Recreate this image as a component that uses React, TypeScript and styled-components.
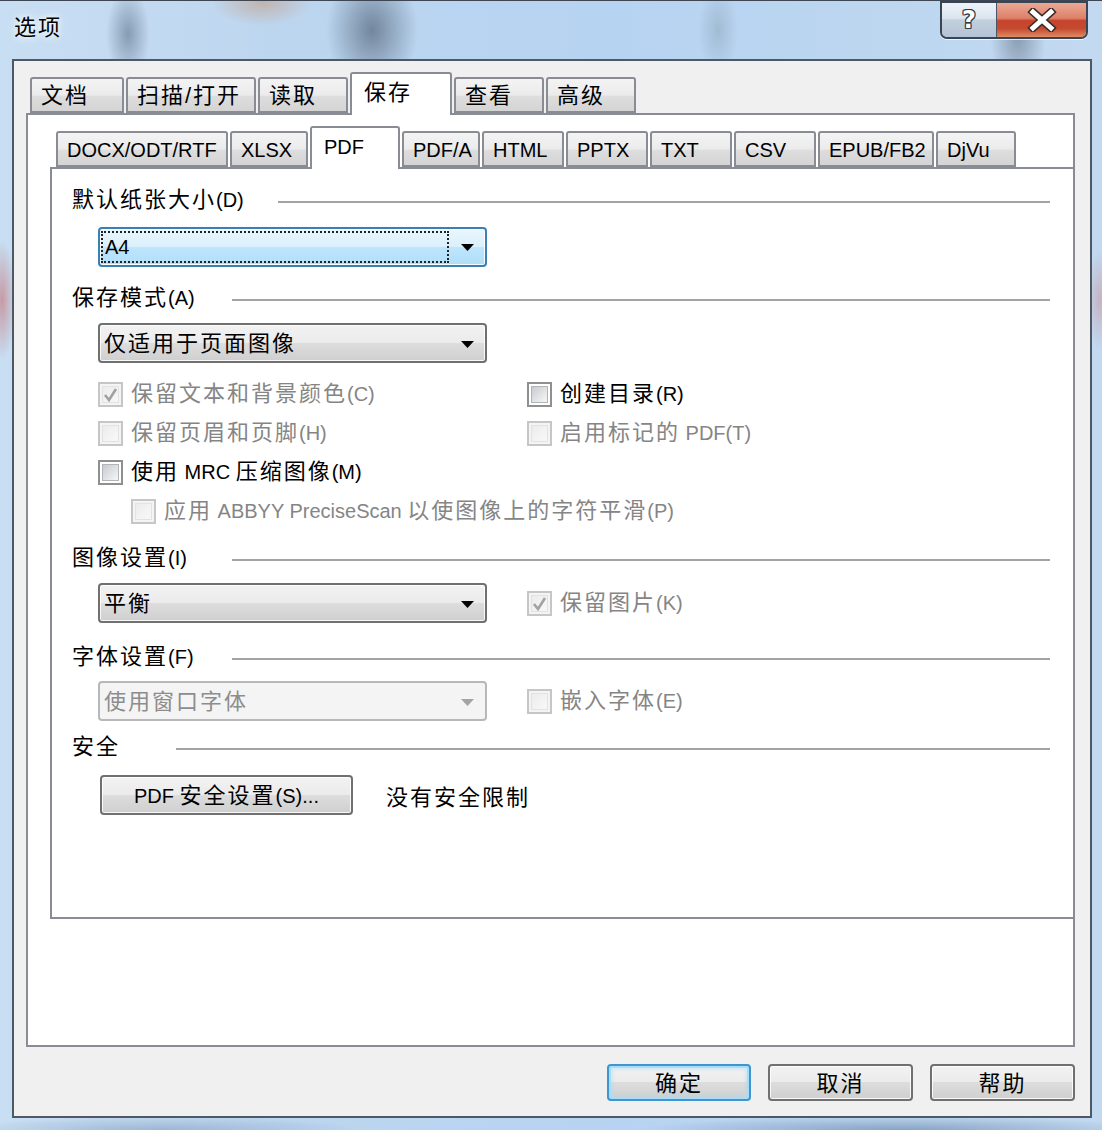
import React from "react";
import styled, { createGlobalStyle, css } from "styled-components";

const FONT = `"Liberation Sans", "Noto Sans CJK SC", sans-serif`;

const GlobalStyle = createGlobalStyle`
  html, body { margin: 0; padding: 0; }
  body { background: #bcd5ee; font-family: ${FONT}; }
  *, *::before, *::after { box-sizing: border-box; }
`;

const Window = styled.div`
  width: 1102px;
  height: 1130px;
  display: flex;
  flex-direction: column;
  overflow: hidden;
  font-family: ${FONT};
  color: #000;
  background:
    radial-gradient(ellipse 22px 46px at 128px 34px, rgba(84, 104, 128, 0.55), transparent 100%),
    radial-gradient(ellipse 46px 64px at 372px 30px, rgba(70, 86, 106, 0.62), transparent 100%),
    radial-gradient(ellipse 50px 24px at 262px 2px, rgba(196, 150, 120, 0.55), transparent 100%),
    radial-gradient(ellipse 20px 44px at 718px 30px, rgba(120, 140, 160, 0.35), transparent 100%),
    radial-gradient(ellipse 28px 60px at 1018px 34px, rgba(80, 94, 110, 0.5), transparent 100%),
    radial-gradient(ellipse 14px 60px at 2px 300px, rgba(196, 110, 110, 0.6), transparent 100%),
    radial-gradient(ellipse 14px 50px at 1100px 300px, rgba(200, 140, 150, 0.5), transparent 100%),
    radial-gradient(ellipse 260px 14px at 900px 1130px, rgba(70, 100, 140, 0.45), transparent 100%),
    radial-gradient(ellipse 200px 14px at 160px 1130px, rgba(70, 100, 140, 0.3), transparent 100%),
    linear-gradient(90deg, #c8def3 0%, #bdd6ef 25%, #b6d3f1 55%, #c2d9f0 100%);
  box-shadow: inset 0 1px 0 #3d4652;
`;

const TitleBar = styled.div`
  height: 59px;
  flex: none;
  display: flex;
  align-items: flex-start;
  padding: 0 14px 0 14px;
`;

const Title = styled.div`
  margin-top: 14px;
  font-size: 22px;
  line-height: 28px;
  letter-spacing: 2px;
  color: #000;
  text-shadow: 0 0 6px #fff, 0 0 12px rgba(255, 255, 255, 0.9);
`;

const CaptionGroup = styled.div`
  margin-left: auto;
  margin-top: 1px;
  display: flex;
  height: 38px;
  border: 2px solid #3a4553;
  border-radius: 0 0 7px 7px;
  overflow: hidden;
  box-shadow: 0 1px 0 rgba(255, 255, 255, 0.7);
`;

const CaptionButton = styled.div<{ $kind: "help" | "close" }>`
  display: flex;
  align-items: center;
  justify-content: center;
  ${(p) =>
    p.$kind === "help"
      ? css`
          width: 55px;
          border-right: 1px solid #4a5565;
          background: linear-gradient(#eef3f9 0%, #dbe5f0 45%, #c3cfdd 50%, #b3c3d6 100%);
        `
      : css`
          width: 89px;
          background: linear-gradient(#eba996 0%, #dd8068 45%, #c7432b 52%, #c44a30 75%, #df8a62 100%);
        `}
`;

const HelpGlyph = styled.span`
  font-family: "DejaVu Sans", sans-serif;
  font-weight: bold;
  font-size: 24px;
  line-height: 1;
  color: #fff;
  text-shadow: 1px 0 #2e3a48, -1px 0 #2e3a48, 0 1px #2e3a48, 0 -1px #2e3a48,
    1px 1px #2e3a48, -1px -1px #2e3a48, 1px -1px #2e3a48, -1px 1px #2e3a48;
`;

const Client = styled.div`
  flex: 1;
  margin: 0 10px 12px 12px;
  border: 2px solid #4e5966;
  background: #f0f0f0;
  display: flex;
  flex-direction: column;
  padding: 11px 15px 15px 12px;
`;

const TabControl = styled.div<{ $inner?: boolean }>`
  display: flex;
  flex-direction: column;
  ${(p) =>
    p.$inner
      ? css`
          margin: 11px 0 0 22px;
        `
      : css`
          flex: 1;
        `}
`;

const TabStrip = styled.div<{ $pad: number }>`
  display: flex;
  align-items: flex-end;
  height: 41px;
  padding-left: ${(p) => p.$pad}px;
  position: relative;
  z-index: 1;
`;

const Tab = styled.div<{ $w: number; $active?: boolean; $latin?: boolean }>`
  width: ${(p) => p.$w}px;
  margin-right: 2px;
  height: ${(p) => (p.$active ? 43 : 36)}px;
  margin-bottom: ${(p) => (p.$active ? -2 : 0)}px;
  border: 2px solid #898c95;
  border-bottom: ${(p) => (p.$active ? "none" : "2px solid #898c95")};
  border-radius: 3px 3px 0 0;
  background: ${(p) =>
    p.$active ? "#fff" : "linear-gradient(#f3f3f3 0%, #ebebeb 50%, #dddddd 55%, #d4d4d4 100%)"};
  display: flex;
  align-items: ${(p) => (p.$active ? "flex-start" : "center")};
  padding: ${(p) => (p.$active ? "5px 0 0 12px" : "2px 0 0 9px")};
  font-size: ${(p) => (p.$latin ? 20 : 22)}px;
  letter-spacing: ${(p) => (p.$latin ? 0 : 2)}px;
  line-height: 28px;
  white-space: nowrap;
  color: #000;
`;

const OuterPanel = styled.div`
  flex: 1;
  border: 2px solid #898c95;
  background: #fff;
  display: flex;
  flex-direction: column;
`;

const InnerPanel = styled.div`
  height: 752px;
  border: 2px solid #898c95;
  border-right: none;
  background: #fff;
  display: flex;
  flex-direction: column;
  padding: 18px 23px 0 20px;
`;

const Header = styled.div<{ $labelWidth: number; $mt: number }>`
  display: grid;
  grid-template-columns: ${(p) => p.$labelWidth}px 1fr;
  align-items: center;
  height: 26px;
  margin-top: ${(p) => p.$mt}px;
`;

const HeaderLabel = styled.span`
  font-size: 22px;
  letter-spacing: 2px;
  line-height: 26px;
  white-space: nowrap;
`;

const Rule = styled.div`
  height: 2px;
  background: #a3a3a3;
  margin-top: 4px;
`;

const Lat = styled.span`
  font-size: 20px;
  letter-spacing: 0;
  white-space: pre;
`;

const Row = styled.div<{ $mt: number; $pl?: number }>`
  display: grid;
  grid-template-columns: 429px 1fr;
  align-items: center;
  margin-top: ${(p) => p.$mt}px;
  padding-left: ${(p) => p.$pl ?? 26}px;
`;

const CheckGrid = styled.div`
  display: grid;
  grid-template-columns: 429px 1fr;
  grid-auto-rows: 32px;
  row-gap: 7px;
  margin-top: 15px;
  padding-left: 26px;
`;

const Combo = styled.div<{ $state?: "focus" | "disabled" }>`
  width: 389px;
  height: 40px;
  display: flex;
  align-items: center;
  padding: 2px 11px 0 4px;
  border: 2px solid #707070;
  border-radius: 4px;
  background: linear-gradient(#f2f2f2 0%, #ebebeb 50%, #dddddd 50%, #cfcfcf 100%);
  box-shadow: inset 0 0 0 1px rgba(255, 255, 255, 0.85);
  font-size: 22px;
  letter-spacing: 2px;
  line-height: 28px;
  color: #000;
  ${(p) =>
    p.$state === "focus" &&
    css`
      border-color: #3c7fb1;
      padding: 0 11px 0 1px;
      background: linear-gradient(#eaf6fd 0%, #d9f0fc 50%, #bee6fd 50%, #b0def8 100%);
    `}
  ${(p) =>
    p.$state === "disabled" &&
    css`
      border-color: #b5b9bc;
      background: #f4f4f4;
      box-shadow: none;
      color: #8d8d8d;
    `}
`;

const ComboValue = styled.span`
  flex: 1;
  white-space: nowrap;
`;

const FocusRect = styled.span`
  flex: 1;
  height: 32px;
  border: 2px dotted #222;
  display: flex;
  align-items: center;
  padding-left: 2px;
  margin-right: 12px;
`;

const CheckItem = styled.label<{ $disabled?: boolean; $span?: boolean; $indent?: number }>`
  display: flex;
  align-items: center;
  gap: 8px;
  grid-column: ${(p) => (p.$span ? "1 / -1" : "auto")};
  padding-left: ${(p) => p.$indent ?? 0}px;
  font-size: 22px;
  letter-spacing: 2px;
  line-height: 28px;
  white-space: nowrap;
  color: ${(p) => (p.$disabled ? "#858585" : "#000")};
`;

const Box = styled.span<{ $disabled?: boolean }>`
  position: relative;
  flex: none;
  width: 25px;
  height: 25px;
  border: 2px solid ${(p) => (p.$disabled ? "#c6c6c6" : "#8e8f8f")};
  background: ${(p) => (p.$disabled ? "#f4f4f4" : "#fff")};
  &::before {
    content: "";
    position: absolute;
    inset: 2px;
    border: 1px solid ${(p) => (p.$disabled ? "#e2e2e2" : "#b1b4b8")};
    background: ${(p) =>
      p.$disabled
        ? "linear-gradient(135deg, #ececec, #f8f8f8)"
        : "linear-gradient(135deg, #c7cacf 0%, #e4e5e7 60%, #f6f6f6 100%)"};
  }
  svg {
    position: absolute;
    left: 1px;
    top: 1px;
  }
`;

const Button = styled.button<{ $w: number; $h?: number; $default?: boolean }>`
  width: ${(p) => p.$w}px;
  height: ${(p) => p.$h ?? 37}px;
  border: 2px solid ${(p) => (p.$default ? "#3d95d2" : "#707070")};
  border-radius: 4px;
  background: linear-gradient(#f2f2f2 0%, #ebebeb 50%, #dddddd 50%, #cfcfcf 100%);
  box-shadow: ${(p) =>
    p.$default
      ? "inset 0 0 0 2px #a9dcf6, inset 0 0 4px 3px rgba(170, 220, 245, 0.6)"
      : "inset 0 0 0 1px rgba(255, 255, 255, 0.85)"};
  font-family: ${FONT};
  font-size: 22px;
  letter-spacing: 2px;
  line-height: 28px;
  color: #000;
  padding: 2px 0 0;
  display: flex;
  align-items: center;
  justify-content: center;
`;

const SecurityRow = styled.div`
  display: flex;
  align-items: center;
  gap: 33px;
  margin-top: 15px;
  padding-left: 28px;
`;

const Note = styled.span`
  font-size: 22px;
  letter-spacing: 2px;
  line-height: 28px;
  padding-top: 5px;
`;

const Footer = styled.div`
  display: flex;
  justify-content: flex-end;
  gap: 17px;
  margin-top: 17px;
`;

const Arrow = ({ color = "#000" }: { color?: string }) => (
  <svg width="13" height="7" viewBox="0 0 13 7">
    <path d="M0 0 H13 L6.5 7 Z" fill={color} />
  </svg>
);

const Check = ({
  checked,
  disabled,
  span,
  indent,
  children,
}: {
  checked?: boolean;
  disabled?: boolean;
  span?: boolean;
  indent?: number;
  children: React.ReactNode;
}) => (
  <CheckItem $disabled={disabled} $span={span} $indent={indent}>
    <Box $disabled={disabled}>
      {checked && (
        <svg width="19" height="19" viewBox="0 0 19 19">
          <path d="M4 10 L8 15 L15 4" fill="none" stroke={disabled ? "#a2a2a2" : "#333"} strokeWidth="2.6" />
        </svg>
      )}
    </Box>
    <span>{children}</span>
  </CheckItem>
);

const outerTabs = [
  { label: "文档", w: 94 },
  { label: "扫描/打开", w: 130 },
  { label: "读取", w: 90 },
  { label: "保存", w: 102, active: true },
  { label: "查看", w: 90 },
  { label: "高级", w: 90 },
];

const innerTabs = [
  { label: "DOCX/ODT/RTF", w: 172 },
  { label: "XLSX", w: 78 },
  { label: "PDF", w: 90, active: true },
  { label: "PDF/A", w: 78 },
  { label: "HTML", w: 82 },
  { label: "PPTX", w: 82 },
  { label: "TXT", w: 82 },
  { label: "CSV", w: 82 },
  { label: "EPUB/FB2", w: 116 },
  { label: "DjVu", w: 80 },
];

export default function App() {
  return (
    <>
      <GlobalStyle />
      <Window>
        <TitleBar>
          <Title>选项</Title>
          <CaptionGroup>
            <CaptionButton $kind="help">
              <HelpGlyph>?</HelpGlyph>
            </CaptionButton>
            <CaptionButton $kind="close">
              <svg width="30" height="24" viewBox="0 0 30 24">
                <path d="M6 4 L24 20 M24 4 L6 20" stroke="#3a2a28" strokeWidth="8" strokeLinecap="square" />
                <path d="M6 4 L24 20 M24 4 L6 20" stroke="#fff" strokeWidth="5" strokeLinecap="square" />
              </svg>
            </CaptionButton>
          </CaptionGroup>
        </TitleBar>
        <Client>
          <TabControl>
            <TabStrip $pad={4}>
              {outerTabs.map((t) => (
                <Tab key={t.label} $w={t.w} $active={t.active}>
                  {t.label}
                </Tab>
              ))}
            </TabStrip>
            <OuterPanel>
              <TabControl $inner>
                <TabStrip $pad={6}>
                  {innerTabs.map((t) => (
                    <Tab key={t.label} $w={t.w} $active={t.active} $latin>
                      {t.label}
                    </Tab>
                  ))}
                </TabStrip>
                <InnerPanel>
                  <Header $labelWidth={206} $mt={0}>
                    <HeaderLabel>
                      默认纸张大小<Lat>(D)</Lat>
                    </HeaderLabel>
                    <Rule />
                  </Header>
                  <Row $mt={14}>
                    <Combo $state="focus">
                      <FocusRect>
                        <Lat>A4</Lat>
                      </FocusRect>
                      <Arrow />
                    </Combo>
                  </Row>

                  <Header $labelWidth={160} $mt={18}>
                    <HeaderLabel>
                      保存模式<Lat>(A)</Lat>
                    </HeaderLabel>
                    <Rule />
                  </Header>
                  <Row $mt={12}>
                    <Combo>
                      <ComboValue>仅适用于页面图像</ComboValue>
                      <Arrow />
                    </Combo>
                  </Row>

                  <CheckGrid>
                    <Check checked disabled>
                      保留文本和背景颜色<Lat>(C)</Lat>
                    </Check>
                    <Check>
                      创建目录<Lat>(R)</Lat>
                    </Check>
                    <Check disabled>
                      保留页眉和页脚<Lat>(H)</Lat>
                    </Check>
                    <Check disabled>
                      启用标记的<Lat>{" PDF(T)"}</Lat>
                    </Check>
                    <Check span>
                      使用<Lat>{" MRC "}</Lat>压缩图像<Lat>(M)</Lat>
                    </Check>
                    <Check span disabled indent={33}>
                      应用<Lat>{" ABBYY PreciseScan "}</Lat>以使图像上的字符平滑<Lat>(P)</Lat>
                    </Check>
                  </CheckGrid>

                  <Header $labelWidth={160} $mt={18}>
                    <HeaderLabel>
                      图像设置<Lat>(I)</Lat>
                    </HeaderLabel>
                    <Rule />
                  </Header>
                  <Row $mt={12}>
                    <Combo>
                      <ComboValue>平衡</ComboValue>
                      <Arrow />
                    </Combo>
                    <Check checked disabled>
                      保留图片<Lat>(K)</Lat>
                    </Check>
                  </Row>

                  <Header $labelWidth={160} $mt={21}>
                    <HeaderLabel>
                      字体设置<Lat>(F)</Lat>
                    </HeaderLabel>
                    <Rule />
                  </Header>
                  <Row $mt={11}>
                    <Combo $state="disabled">
                      <ComboValue>使用窗口字体</ComboValue>
                      <Arrow color="#a4a4a4" />
                    </Combo>
                    <Check disabled>
                      嵌入字体<Lat>(E)</Lat>
                    </Check>
                  </Row>

                  <Header $labelWidth={104} $mt={13}>
                    <HeaderLabel>安全</HeaderLabel>
                    <Rule />
                  </Header>
                  <SecurityRow>
                    <Button $w={253} $h={40}>
                      <Lat>{"PDF "}</Lat>安全设置<Lat>(S)...</Lat>
                    </Button>
                    <Note>没有安全限制</Note>
                  </SecurityRow>
                </InnerPanel>
              </TabControl>
            </OuterPanel>
          </TabControl>
          <Footer>
            <Button $w={144} $default>
              确定
            </Button>
            <Button $w={145}>取消</Button>
            <Button $w={145}>帮助</Button>
          </Footer>
        </Client>
      </Window>
    </>
  );
}
